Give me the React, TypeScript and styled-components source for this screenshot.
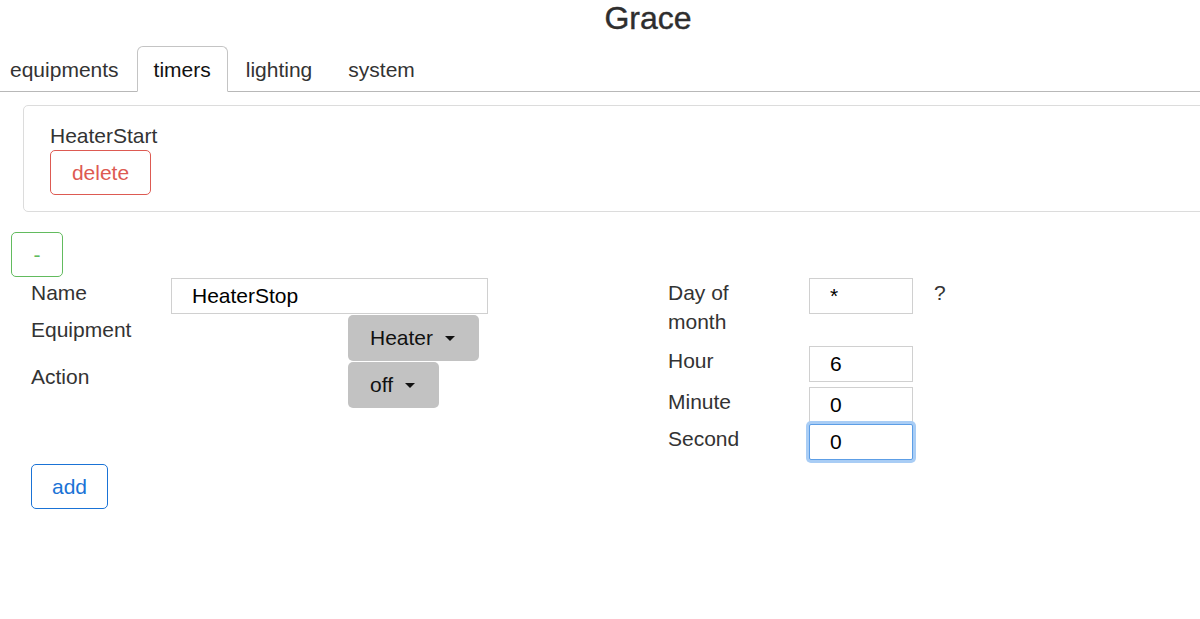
import React from "react";
import styled, { createGlobalStyle } from "styled-components";

const Global = createGlobalStyle`
  html, body { margin: 0; padding: 0; background: #fff; overflow: hidden; }
  body { font-family: "Liberation Sans", Arial, sans-serif; font-size: 21px; color: #333; }
  * { box-sizing: border-box; }
`;

const Page = styled.div`
  width: 1296px;
`;

const Title = styled.h1`
  margin: 0;
  height: 46px;
  line-height: 36px;
  text-align: center;
  font-size: 32px;
  font-weight: 400;
  color: #2e2e2e;
  -webkit-text-stroke: 0.4px #2e2e2e;
`;

const Tabs = styled.nav`
  display: flex;
  align-items: flex-end;
  height: 46px;
  border-bottom: 1px solid #b8b8b8;
`;

const Tab = styled.div<{ $active?: boolean; $first?: boolean }>`
  height: 46px;
  margin-bottom: -1px;
  padding: 0 ${(p) => (p.$active ? "16px" : "17px")};
  margin-left: ${(p) => (p.$first ? "-8px" : "0")};
  line-height: 46px;
  font-size: 21px;
  color: ${(p) => (p.$active ? "#111" : "#333")};
  border: 1px solid ${(p) => (p.$active ? "#c4c4c4" : "transparent")};
  border-bottom: 1px solid ${(p) => (p.$active ? "#fff" : "transparent")};
  border-radius: 6px 6px 0 0;
  background: ${(p) => (p.$active ? "#fff" : "transparent")};
`;

const Card = styled.div`
  margin: 13px 0 0 23px;
  border: 1px solid #dcdcdc;
  border-radius: 5px;
  padding: 16px 26px 16px;
`;

const ItemName = styled.div`
  line-height: 28px;
  color: #333;
`;

const OutlineButton = styled.button<{ $color: string; $w: number }>`
  display: block;
  width: ${(p) => p.$w}px;
  height: 45px;
  border: 1px solid ${(p) => p.$color};
  border-radius: 5px;
  background: #fff;
  color: ${(p) => p.$color};
  font-family: inherit;
  font-size: 21px;
  padding: 0;
`;

const MinusWrap = styled.div`
  margin: 20px 0 0 11px;
`;

const Form = styled.div`
  display: flex;
  margin: 1px 0 0 31px;
`;

const LeftCol = styled.div`
  width: 637px;
`;

const RightCol = styled.div`
  width: 400px;
`;

const Row = styled.div<{ $h: number; $labelW: number }>`
  display: flex;
  align-items: flex-start;
  height: ${(p) => p.$h}px;
  & > label:first-child {
    width: ${(p) => p.$labelW}px;
    flex: none;
  }
`;

const Label = styled.label<{ $wrap?: number }>`
  display: block;
  line-height: 29px;
  color: #333;
  & > span {
    display: block;
    width: ${(p) => (p.$wrap ? `${p.$wrap}px` : "auto")};
  }
`;

const TextInput = styled.input<{ $w: number; $focus?: boolean }>`
  width: ${(p) => p.$w}px;
  height: 36px;
  border: 1px solid ${(p) => (p.$focus ? "#5d9ee6" : "#d0d0d0")};
  border-radius: ${(p) => (p.$focus ? "2px" : "0")};
  box-shadow: ${(p) => (p.$focus ? "0 0 0 3px #a9cdf5" : "none")};
  outline: none;
  padding: 0 0 0 20px;
  font-family: inherit;
  font-size: 21px;
  color: #000;
  background: #fff;
`;

const Dropdown = styled.button<{ $offset: number }>`
  display: flex;
  align-items: center;
  margin-left: ${(p) => p.$offset}px;
  height: 46px;
  padding: 0 24px 0 22px;
  border: none;
  border-radius: 5px;
  background: #c2c2c2;
  font-family: inherit;
  font-size: 21px;
  color: #111;
`;

const Caret = styled.span`
  display: inline-block;
  margin-left: 12px;
  width: 0;
  height: 0;
  border-left: 5px solid transparent;
  border-right: 5px solid transparent;
  border-top: 5px solid #111;
`;

const Help = styled.span`
  margin-left: 21px;
  line-height: 29px;
  color: #333;
`;

const AddWrap = styled.div`
  margin-top: 57px;
`;

export default function App() {
  return (
    <Page>
      <Global />
      <Title>Grace</Title>
      <Tabs>
        <Tab $first>equipments</Tab>
        <Tab $active>timers</Tab>
        <Tab>lighting</Tab>
        <Tab>system</Tab>
      </Tabs>
      <Card>
        <ItemName>HeaterStart</ItemName>
        <OutlineButton $color="#dd5a52" $w={101}>delete</OutlineButton>
      </Card>
      <MinusWrap>
        <OutlineButton $color="#62bb5e" $w={52}>-</OutlineButton>
      </MinusWrap>
      <Form>
        <LeftCol>
          <Row $h={37} $labelW={140}>
            <Label>Name</Label>
            <TextInput $w={317} defaultValue="HeaterStop" />
          </Row>
          <Row $h={47} $labelW={140}>
            <Label>Equipment</Label>
            <Dropdown $offset={177}>
              Heater
              <Caret />
            </Dropdown>
          </Row>
          <Row $h={45} $labelW={140}>
            <Label>Action</Label>
            <Dropdown $offset={177}>
              off
              <Caret />
            </Dropdown>
          </Row>
          <AddWrap>
            <OutlineButton $color="#1a73d6" $w={77}>add</OutlineButton>
          </AddWrap>
        </LeftCol>
        <RightCol>
          <Row $h={68} $labelW={141}>
            <Label $wrap={90}>
              <span>Day of month</span>
            </Label>
            <TextInput $w={104} defaultValue="*" />
            <Help>?</Help>
          </Row>
          <Row $h={41} $labelW={141}>
            <Label>Hour</Label>
            <TextInput $w={104} defaultValue="6" />
          </Row>
          <Row $h={37} $labelW={141}>
            <Label>Minute</Label>
            <TextInput $w={104} defaultValue="0" />
          </Row>
          <Row $h={38} $labelW={141}>
            <Label>Second</Label>
            <TextInput $w={104} $focus defaultValue="0" />
          </Row>
        </RightCol>
      </Form>
    </Page>
  );
}
